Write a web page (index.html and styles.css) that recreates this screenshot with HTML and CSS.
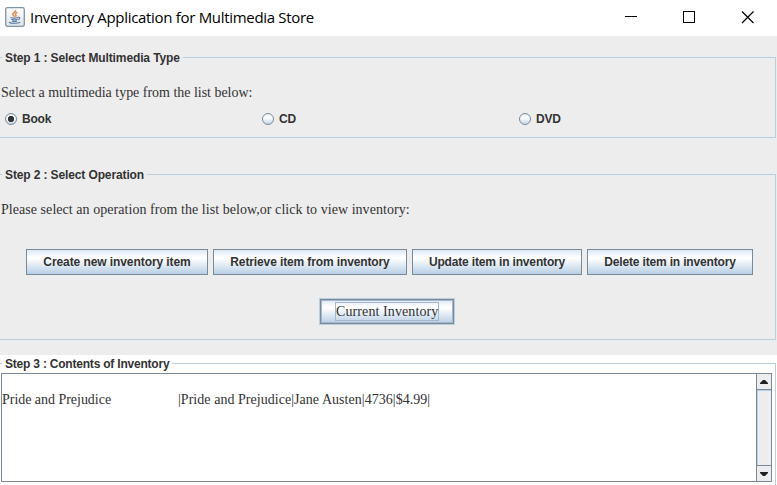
FILE: index.html
```html
<!DOCTYPE html>
<html lang="en">
<head>
<meta charset="utf-8">
<title>Inventory Application for Multimedia Store</title>
<link rel="stylesheet" href="styles.css">
</head>
<body>
<header class="titlebar">
  <svg class="app-icon" width="20" height="20" viewBox="0 0 20 20">
    <defs><linearGradient id="tile" x1="0" y1="0" x2="0" y2="1"><stop offset="0" stop-color="#fff"/><stop offset="1" stop-color="#dce3ea"/></linearGradient></defs>
    <rect x=".7" y=".7" width="18.6" height="18.6" rx="1.8" fill="url(#tile)" stroke="#8295a5" stroke-width="1.3"/>
    <path d="M10.500 3c.7 2-3.300 2.700-2.600 4.600.3.900 1.300 1.400 1.200 2.300M12.300 5.300c-1.800.8-2.500 1.700-1.500 2.700.5.600.2 1.300-.3 1.800" fill="none" stroke="#e08c4e" stroke-width="1.500"/>
    <path d="M5.500 10.500c1.500.5 6 .5 7.600 0M6.300 12.200c1.500.6 5 .6 6.300 0M7 14c1.400.5 4 .5 5.100 0M13 10.400c2.400-.6 2.400 1.700.1 2.400M4 15.200c2.300 1.600 9.500 1.400 11.300-.1" fill="none" stroke="#58799a" stroke-width="1.100"/>
  </svg>
  <h1 class="title">Inventory Application for Multimedia Store</h1>
  <svg class="controls" width="130" height="14" viewBox="0 0 130 14" fill="none" stroke="#000">
    <path d="M0 5.500h12" shape-rendering="crispEdges"/>
    <path d="M58.500.500h11v11h-11z" shape-rendering="crispEdges"/>
    <path d="M117 .500l11.500 11.500M128.500.500L117 12" stroke-width="1.200"/>
  </svg>
</header>
<main>
  <section class="group media">
    <h2 class="legend l1">Step 1 : Select Multimedia Type</h2>
    <p class="prompt p1">Select a multimedia type from the list below:</p>
    <div class="radios">
      <label class="radio"><span class="dot on"></span>Book</label>
      <label class="radio"><span class="dot"></span>CD</label>
      <label class="radio"><span class="dot"></span>DVD</label>
    </div>
  </section>
  <section class="group operation">
    <h2 class="legend l2">Step 2 : Select Operation</h2>
    <p class="prompt p2">Please select an operation from the list below,or click to view inventory:</p>
    <div class="buttons">
      <button class="btn create">Create new inventory item</button>
      <button class="btn retrieve">Retrieve item from inventory</button>
      <button class="btn update">Update item in inventory</button>
      <button class="btn delete">Delete item in inventory</button>
    </div>
    <button class="btn current"><span class="focus">Current Inventory</span></button>
  </section>
  <div class="contents">
    <section class="group inventory">
      <h2 class="legend l3">Step 3 : Contents of Inventory</h2>
      <div class="scrollpane">
        <div class="text"><span class="name">Pride and Prejudice</span><span class="record">|Pride and Prejudice|Jane Austen|4736|$4.99|</span></div>
        <div class="scrollbar">
          <span class="arrow"><svg width="8" height="4" viewBox="0 0 8 4"><path d="M0 4V3L3 0h2l3 3v1z" fill="#222"/></svg></span>
          <span class="thumb"></span>
          <span class="arrow down"><svg width="8" height="4" viewBox="0 0 8 4"><path d="M0 0v1l3 3h2l3-3V0z" fill="#222"/></svg></span>
        </div>
      </div>
    </section>
  </div>
</main>
</body>
</html>
```
FILE: styles.css
```css
* { box-sizing: border-box; }
body {
  margin: 0;
  width: 777px;
  height: 485px;
  overflow: hidden;
  background: #ededed;
  color: #333;
  font: bold 12px/16px "Liberation Sans", Arial, sans-serif;
}
h1, h2, p { margin: 0; font-weight: inherit; white-space: nowrap; }
.titlebar {
  display: flex;
  height: 36px;
  padding: 7px 22px 0 5px;
  background: #fff;
}
.title {
  margin-left: 5px;
  color: #000;
  font: 15px/20px "Open Sans", "Noto Sans", sans-serif;
  letter-spacing: -0.31px;
}
.controls { margin: 4px 0 0 auto; }
main { padding-top: 21px; }
.group {
  width: 776px;
  border: 1px solid #b8cfe0;
  border-left: 0;
}
.media { height: 81px; }
.operation { height: 166px; margin-top: 36px; }
.legend {
  width: max-content;
  margin: -8px 0 0 2px;
  padding: 0 3px;
  background: #ededed;
  font-size: 12px;
  letter-spacing: -0.12px;
}
.l3 { letter-spacing: -0.21px; }
.prompt, .text, .current { font: 14px/18px "Liberation Serif", "Times New Roman", serif; }
.prompt { padding-left: 1px; margin-top: 18px; }
.p1 { letter-spacing: -0.02px; }
.p2 { letter-spacing: 0.05px; }
.radios {
  display: grid;
  grid-template-columns: repeat(3, 257px);
  margin: 9px 0 0 5px;
}
.radio { display: flex; align-items: center; height: 16px; gap: 5px; letter-spacing: -0.2px; }
.dot {
  width: 12px;
  height: 12px;
  margin-top: -1px;
  border: 1px solid #7a8a99;
  border-radius: 50%;
  background: linear-gradient(#e4edf5, #fff 35%, #c4d7e8);
}
.dot.on { background: radial-gradient(circle, #333 0 2.8px, transparent 3.5px), linear-gradient(#e4edf5, #fff 35%, #c4d7e8); }
.buttons { display: flex; gap: 5px; margin: 30px 0 0 26px; }
.btn {
  height: 26px;
  padding: 0;
  border: 1px solid #7a8a99;
  border-radius: 0;
  background: linear-gradient(#dde8f3, #fff 30%, #fff 35%, #b8cfe5);
  color: #333;
  font: bold 12px/16px "Liberation Sans", Arial, sans-serif;
  letter-spacing: -0.08px;
  white-space: nowrap;
}
.create { width: 182px; }
.retrieve { width: 194px; letter-spacing: -0.12px; }
.update { width: 170px; letter-spacing: -0.16px; }
.delete { width: 166px; letter-spacing: -0.16px; }
.btn.current {
  display: flex;
  align-items: center;
  justify-content: center;
  width: 134px;
  height: 25px;
  margin: 24px 0 0 320px;
  box-shadow: 0 0 0 1px #b8cfe0, inset 0 0 0 1px #a3b8cc;
  font: 14px/17px "Liberation Serif", "Times New Roman", serif;
  letter-spacing: 0.1px;
}
.focus { width: 104px; height: 19px; border: 1px solid #a3b8cc; }
.contents { height: 130px; margin-top: 15px; padding-top: 8px; background: #fff; }
.inventory { height: 140px; }
.inventory .legend { background: #fff; }
.scrollpane {
  display: flex;
  width: 771px;
  height: 109px;
  margin: 1px 0 0 1px;
  border: 1px solid #7a8a99;
}
.text { display: flex; flex: 1; padding-top: 17px; white-space: nowrap; }
.name { width: 176px; letter-spacing: -0.03px; }
.record { letter-spacing: 0.04px; }
.scrollbar {
  display: flex;
  flex-direction: column;
  width: 15px;
  border-left: 1px solid #7a8a99;
  background: #ededed;
}
.arrow {
  display: flex;
  align-items: center;
  justify-content: center;
  height: 16px;
  border-bottom: 1px solid #7a8a99;
}
.arrow.down { border-top: 1px solid #7a8a99; border-bottom: 0; }
.thumb { flex: 1; border-left: 1px solid #b8cfe5; border-top: 1px solid #b8cfe5; }
```
